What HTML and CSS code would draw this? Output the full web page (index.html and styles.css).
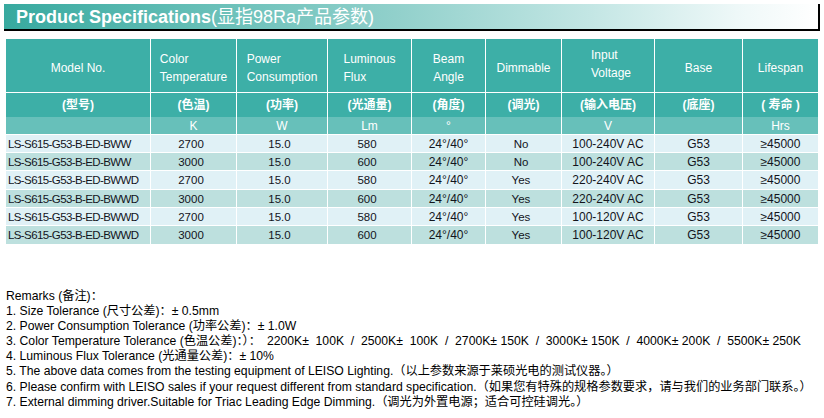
FILE: index.html
```html
<!DOCTYPE html>
<html lang="en">
<head>
<meta charset="utf-8">
<title>Product Specifications</title>
<link rel="stylesheet" href="styles.css">
</head>
<body>
<div class="page">
  <div class="title-bar"><span class="title-en">Product Specifications</span><span class="title-cn">(显指98Ra产品参数)</span></div>
  <table class="spec">
    <colgroup>
      <col class="w-model"><col class="w-cct"><col class="w-power"><col class="w-flux"><col class="w-beam"><col class="w-dim"><col class="w-volt"><col class="w-base"><col class="w-life">
    </colgroup>
    <thead>
      <tr class="head-en">
        <th>Model No.</th>
        <th><span class="stack">Color<br>Temperature</span></th>
        <th><span class="stack">Power<br>Consumption</span></th>
        <th><span class="stack">Luminous<br>Flux</span></th>
        <th>Beam<br>Angle</th>
        <th>Dimmable</th>
        <th><span class="stack raise">Input<br>Voltage</span></th>
        <th>Base</th>
        <th>Lifespan</th>
      </tr>
      <tr class="head-cn">
        <th>(型号)</th>
        <th>(色温)</th>
        <th>(功率)</th>
        <th>(光通量)</th>
        <th>(角度)</th>
        <th>(调光)</th>
        <th>(输入电压)</th>
        <th>(底座)</th>
        <th>( 寿命 )</th>
      </tr>
      <tr class="head-unit">
        <th></th>
        <th>K</th>
        <th>W</th>
        <th>Lm</th>
        <th>°</th>
        <th></th>
        <th>V</th>
        <th></th>
        <th>Hrs</th>
      </tr>
    </thead>
    <tbody>
      <tr class="row-a">
        <td class="model">LS-S615-G53-B-ED-BWW</td><td class="sm">2700</td><td class="sm">15.0</td><td class="sm">580</td><td>24°/40°</td><td class="sm">No</td><td>100-240V AC</td><td>G53</td><td>≥45000</td>
      </tr>
      <tr class="row-b">
        <td class="model">LS-S615-G53-B-ED-BWW</td><td class="sm">3000</td><td class="sm">15.0</td><td class="sm">600</td><td>24°/40°</td><td class="sm">No</td><td>100-240V AC</td><td>G53</td><td>≥45000</td>
      </tr>
      <tr class="row-a tall">
        <td class="model">LS-S615-G53-B-ED-BWWD</td><td class="sm">2700</td><td class="sm">15.0</td><td class="sm">580</td><td>24°/40°</td><td class="sm">Yes</td><td>220-240V AC</td><td>G53</td><td>≥45000</td>
      </tr>
      <tr class="row-b">
        <td class="model">LS-S615-G53-B-ED-BWWD</td><td class="sm">3000</td><td class="sm">15.0</td><td class="sm">600</td><td>24°/40°</td><td class="sm">Yes</td><td>220-240V AC</td><td>G53</td><td>≥45000</td>
      </tr>
      <tr class="row-a">
        <td class="model">LS-S615-G53-B-ED-BWWD</td><td class="sm">2700</td><td class="sm">15.0</td><td class="sm">580</td><td>24°/40°</td><td class="sm">Yes</td><td>100-120V AC</td><td>G53</td><td>≥45000</td>
      </tr>
      <tr class="row-b tall">
        <td class="model">LS-S615-G53-B-ED-BWWD</td><td class="sm">3000</td><td class="sm">15.0</td><td class="sm">600</td><td>24°/40°</td><td class="sm">Yes</td><td>100-120V AC</td><td>G53</td><td>≥45000</td>
      </tr>
    </tbody>
  </table>
  <div class="remarks">
    <div class="line">Remarks (备注)：</div>
    <div class="line">1. Size Tolerance (尺寸公差)：± 0.5mm</div>
    <div class="line">2. Power Consumption Tolerance (功率公差)：± 1.0W</div>
    <div class="line">3. Color Temperature Tolerance (色温公差)：）：<span class="tol">2200K±  100K  /  2500K±  100K  /  2700K± 150K  /  3000K± 150K  /  4000K± 200K  /  5500K± 250K</span></div>
    <div class="line">4. Luminous Flux Tolerance (光通量公差)：± 10%</div>
    <div class="line">5. The above data comes from the testing equipment of LEISO Lighting.（以上参数来源于莱硕光电的测试仪器。）</div>
    <div class="line">6. Please confirm with LEISO sales if your request different from standard specification.（如果您有特殊的规格参数要求，请与我们的业务部门联系。）</div>
    <div class="line">7. External dimming driver.Suitable for Triac Leading Edge Dimming.（调光为外置电源；适合可控硅调光。）</div>
  </div>
</div>
</body>
</html>
```
FILE: styles.css
```css
html, body {
  margin: 0;
  padding: 0;
  background: #ffffff;
}

body {
  font-family: "Liberation Sans", Arial, "Noto Sans CJK SC", sans-serif;
  color: #000;
}

.page {
  padding-top: 4px;
}

.title-bar {
  box-sizing: border-box;
  margin-left: 4px;
  width: 816px;
  height: 27px;
  padding-left: 12px;
  border-right: 2px solid #000;
  border-bottom: 2px solid #000;
  background: linear-gradient(90deg, #37a99f 0%, #62bdb5 22%, #91d0cb 48%, #c3e6e4 72%, #eef8f8 90%, #ffffff 100%);
  display: flex;
  align-items: center;
  color: #ffffff;
  font-size: 18px;
  line-height: 20px;
  white-space: nowrap;
}

.title-en {
  font-weight: bold;
}

.title-cn {
  font-family: "Liberation Sans", "Noto Sans CJK SC", sans-serif;
  font-weight: normal;
}

.spec {
  margin: 8px 0 0 6px;
  width: 812px;
  table-layout: fixed;
  border-collapse: separate;
  border-spacing: 0;
  font-family: "Liberation Sans", Arial, "Noto Sans CJK SC", sans-serif;
}

.w-model { width: 145px; }
.w-cct { width: 86px; }
.w-power { width: 91px; }
.w-flux { width: 84px; }
.w-beam { width: 74px; }
.w-dim { width: 76px; }
.w-volt { width: 93px; }
.w-base { width: 88px; }
.w-life { width: 75px; }

.spec th,
.spec td {
  box-sizing: border-box;
  padding: 0;
  border-right: 1px solid #ffffff;
  text-align: center;
  vertical-align: middle;
  white-space: nowrap;
  overflow: hidden;
}

.spec th:last-child,
.spec td:last-child {
  border-right: 0;
}

.spec th {
  color: #ffffff;
  font-weight: normal;
  font-size: 12px;
}

.head-en th {
  height: 54px;
  line-height: 18px;
  padding-top: 4px;
  background: #3dafa7;
  border-bottom: 1px solid #ffffff;
}

.stack {
  display: inline-block;
  text-align: left;
}

.stack.raise {
  position: relative;
  top: -4px;
  left: 3px;
}

.head-cn th {
  height: 24px;
  line-height: 16px;
  background: #3dafa7;
  font-weight: bold;
  font-family: "Liberation Sans", "Noto Sans CJK SC", sans-serif;
}

.head-unit th {
  height: 18px;
  line-height: 16px;
  background: #67c0ba;
  border-bottom: 1px solid #ffffff;
}

.spec td {
  height: 18px;
  line-height: 16px;
  font-size: 12px;
  color: #12141c;
  border-bottom: 1px solid #ffffff;
}

.spec tr.tall td {
  height: 19px;
}

.spec td.sm {
  font-size: 11.5px;
  padding-right: 5px;
}

.spec td.model {
  text-align: left;
  padding-left: 2px;
  font-size: 11.5px;
  letter-spacing: -0.6px;
}

.row-a td {
  background: #e0f1f6;
}

.row-b td {
  background: #bde0de;
}

.remarks {
  margin: 44px 0 0 6px;
  font-family: "Liberation Sans", Arial, "Noto Sans CJK SC", sans-serif;
  font-size: 12.2px;
  line-height: 15.1px;
  color: #000;
}

.line {
  white-space: nowrap;
}

.tol {
  white-space: pre;
  margin-left: 6px;
}
```
